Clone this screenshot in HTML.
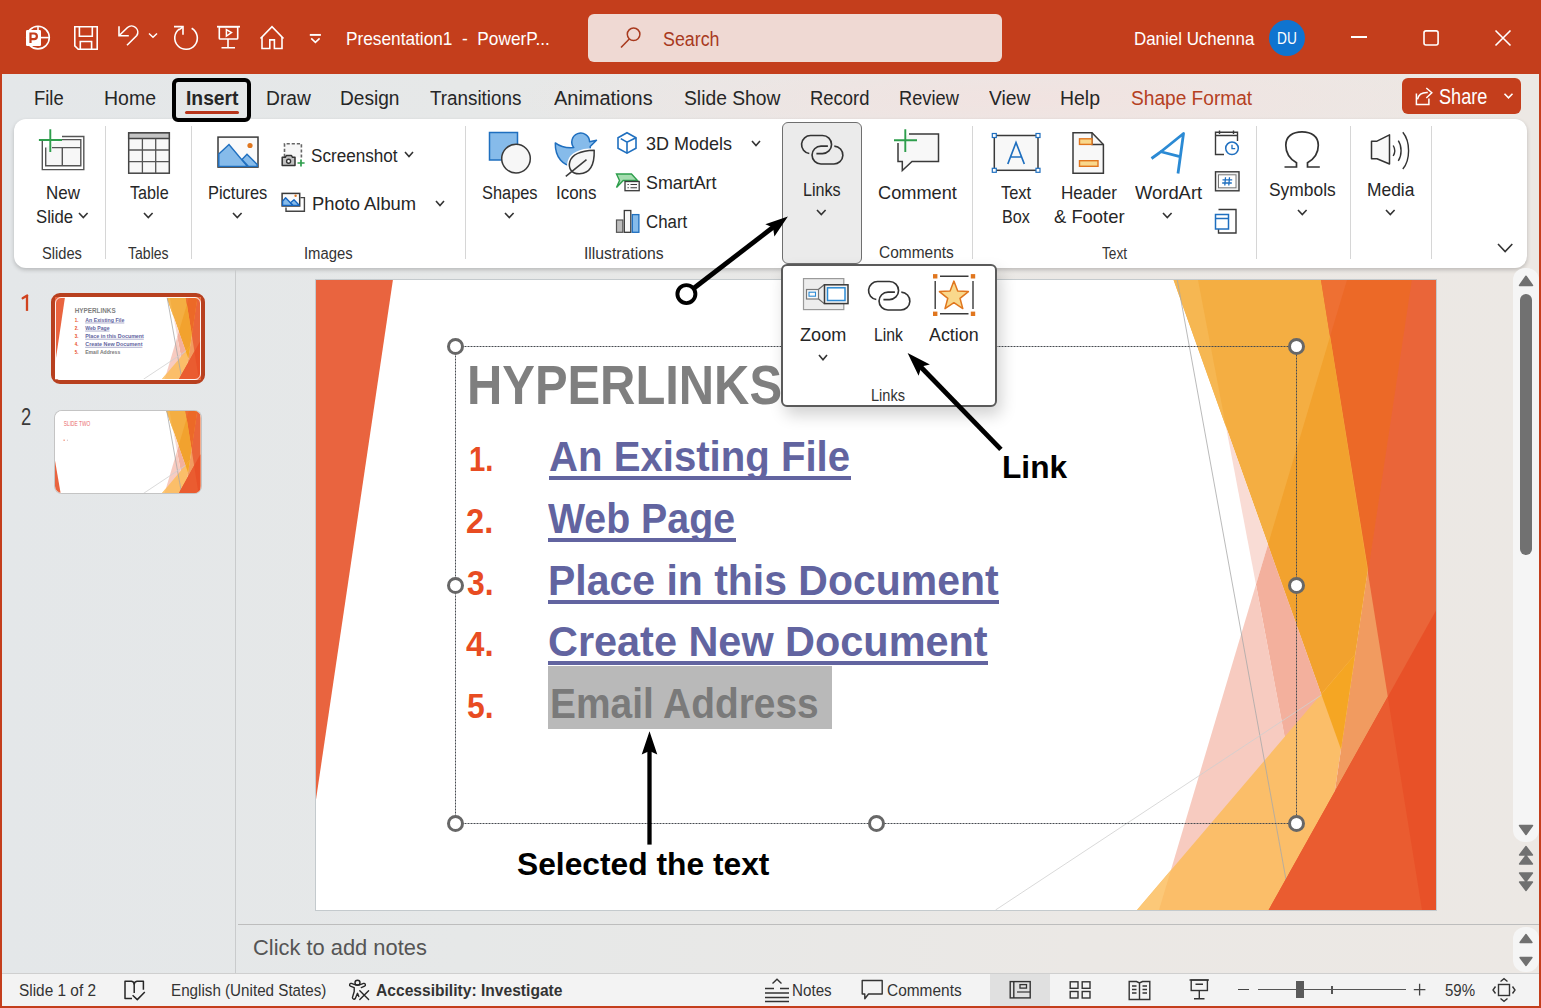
<!DOCTYPE html><html><head><meta charset="utf-8"><style>html,body{margin:0;padding:0;width:1541px;height:1008px;overflow:hidden;position:relative;}body{font-family:"Liberation Sans",sans-serif;}</style></head><body><div style="position:absolute;left:0px;top:0px;width:1541px;height:1008px;background:#C43E1C"></div>
<div style="position:absolute;left:2px;top:74px;width:1537px;height:932px;background:linear-gradient(90deg,#E4E7E9 0%,#E6E8E8 30%,#EBE8E5 70%,#ECE8E4 100%)"></div>
<div style="position:absolute;left:400px;top:74px;width:1139px;height:50px;background:radial-gradient(ellipse 45% 120% at 55% 50%,rgba(242,226,224,0.85),rgba(242,226,224,0) 100%)"></div>
<svg style="position:absolute;left:24px;top:24px;" width="28" height="28" viewBox="0 0 28 28"><circle cx="14" cy="13.6" r="11.3" fill="none" stroke="#fff" stroke-width="1.6"/><line x1="14" y1="2" x2="14" y2="6" stroke="#fff" stroke-width="1.6"/><line x1="17" y1="13.6" x2="25.5" y2="13.6" stroke="#fff" stroke-width="1.6"/><rect x="2" y="6" width="15" height="16" rx="1.2" fill="#fff"/><path d="M6.5 19V9.5h3.6a2.8 2.8 0 0 1 0 5.6H6.5" fill="none" stroke="#C43E1C" stroke-width="2.2"/></svg>
<svg style="position:absolute;left:72px;top:24px;" width="28" height="28" viewBox="0 0 28 28"><path d="M2.8 2.8H25.2V25.2H6.2L2.8 21.8Z" fill="none" stroke="#fff" stroke-width="1.6"/><path d="M7.4 2.8V12.3H20.3V2.8" fill="none" stroke="#fff" stroke-width="1.6"/><path d="M8.3 25.2V17.5H19.6V25.2" fill="none" stroke="#fff" stroke-width="1.6"/></svg>
<svg style="position:absolute;left:116px;top:24px;" width="28" height="28" viewBox="0 0 28 28"><path d="M3 2.2V11.8H12.8" fill="none" stroke="#fff" stroke-width="1.6"/><path d="M3.5 11.3L11.5 3.5A6.2 6.2 0 0 1 20.8 11.5L11 21.2" fill="none" stroke="#fff" stroke-width="1.6"/></svg>
<svg style="position:absolute;left:146px;top:30px;" width="14" height="12" viewBox="0 0 14 12"><path d="M3 3.5L7 7.2L11 3.5" fill="none" stroke="#fff" stroke-width="1.5"/></svg>
<svg style="position:absolute;left:172px;top:24px;" width="28" height="28" viewBox="0 0 28 28"><path d="M19.65 4.2A11.3 11.3 0 1 1 7.5 4.8" fill="none" stroke="#fff" stroke-width="1.6"/><path d="M2 2.6H11V10.7" fill="none" stroke="#fff" stroke-width="1.6"/><path d="M10.5 3.1L7 6" fill="none" stroke="#fff" stroke-width="1.6"/></svg>
<svg style="position:absolute;left:214px;top:22px;" width="30" height="30" viewBox="0 0 30 30"><path d="M3 4.7H26" stroke="#fff" stroke-width="1.8"/><rect x="5.3" y="4.7" width="18.4" height="12.3" rx="0.8" fill="none" stroke="#fff" stroke-width="1.6"/><path d="M14 17V25.8M7.5 25.8H21" stroke="#fff" stroke-width="1.6"/><path d="M12.4 7.6L17.5 10.6L12.4 14Z" fill="none" stroke="#fff" stroke-width="1.5"/></svg>
<svg style="position:absolute;left:258px;top:22px;" width="28" height="30" viewBox="0 0 28 30"><path d="M2.5 16.5L14 4.7L25.5 16.5" fill="none" stroke="#fff" stroke-width="1.7"/><path d="M4 15V26.5H11.8V17.9H16.4V26.5H24V15" fill="none" stroke="#fff" stroke-width="1.6"/></svg>
<svg style="position:absolute;left:306px;top:30px;" width="18" height="16" viewBox="0 0 18 16"><path d="M3.8 4.9H14.9" stroke="#fff" stroke-width="1.9"/><path d="M5.2 8.4L9.4 12.4L13.6 8.4" fill="none" stroke="#fff" stroke-width="1.6"/></svg>
<div style="position:absolute;left:345.60px;top:29.00px;font-size:19.04px;line-height:19.04px;font-weight:normal;color:#FFFFFF;white-space:pre;transform:scaleX(0.9063);transform-origin:0 0;">Presentation1  -  PowerP...</div>
<div style="position:absolute;left:588px;top:14px;width:414px;height:48px;background:#EFD9D3;border-radius:6px"></div>
<svg style="position:absolute;left:616px;top:24px;" width="26" height="28" viewBox="0 0 26 28"><circle cx="17.6" cy="10.3" r="6.3" fill="none" stroke="#A83A1E" stroke-width="1.5"/><path d="M13.3 15L5 23.5" stroke="#A83A1E" stroke-width="1.6"/></svg>
<div style="position:absolute;left:662.70px;top:30.00px;font-size:19.77px;line-height:19.77px;font-weight:normal;color:#A83A1E;white-space:pre;transform:scaleX(0.9022);transform-origin:0 0;">Search</div>
<div style="position:absolute;left:1134.00px;top:29.00px;font-size:19.04px;line-height:19.04px;font-weight:normal;color:#FFFFFF;white-space:pre;transform:scaleX(0.8885);transform-origin:0 0;">Daniel Uchenna</div>
<div style="position:absolute;left:1269px;top:20px;width:36px;height:36px;background:#0F74D0;border-radius:50%"></div>
<div style="position:absolute;left:1277.20px;top:31.00px;font-size:15.99px;line-height:15.99px;font-weight:normal;color:#FFFFFF;white-space:pre;transform:scaleX(0.8576);transform-origin:0 0;">DU</div>
<div style="position:absolute;left:1351px;top:36.3px;width:15.6px;height:1.6px;background:#fff"></div>
<svg style="position:absolute;left:1420px;top:27px;overflow:visible;" width="22" height="22" viewBox="1420 27 22 22"><rect x="1424" y="30.9" width="14.1" height="14.1" rx="2" fill="none" stroke="#fff" stroke-width="1.6"/></svg>
<svg style="position:absolute;left:1494px;top:29px;" width="18" height="18" viewBox="0 0 18 18"><path d="M1.5 1.5L16.5 16.5M16.5 1.5L1.5 16.5" stroke="#fff" stroke-width="1.6"/></svg>
<div style="position:absolute;left:34.30px;top:88.00px;font-size:20.35px;line-height:20.35px;font-weight:normal;color:#262626;white-space:pre;transform:scaleX(0.9060);transform-origin:0 0;">File</div>
<div style="position:absolute;left:103.60px;top:88.00px;font-size:20.35px;line-height:20.35px;font-weight:normal;color:#262626;white-space:pre;transform:scaleX(0.9578);transform-origin:0 0;">Home</div>
<div style="position:absolute;left:185.50px;top:88.00px;font-size:20.35px;line-height:20.35px;font-weight:bold;color:#262626;white-space:pre;transform:scaleX(0.9475);transform-origin:0 0;">Insert</div>
<div style="position:absolute;left:265.50px;top:88.00px;font-size:20.35px;line-height:20.35px;font-weight:normal;color:#262626;white-space:pre;transform:scaleX(0.9446);transform-origin:0 0;">Draw</div>
<div style="position:absolute;left:339.50px;top:88.00px;font-size:20.35px;line-height:20.35px;font-weight:normal;color:#262626;white-space:pre;transform:scaleX(0.9393);transform-origin:0 0;">Design</div>
<div style="position:absolute;left:430.40px;top:88.00px;font-size:20.35px;line-height:20.35px;font-weight:normal;color:#262626;white-space:pre;transform:scaleX(0.9254);transform-origin:0 0;">Transitions</div>
<div style="position:absolute;left:554.30px;top:88.00px;font-size:20.35px;line-height:20.35px;font-weight:normal;color:#262626;white-space:pre;transform:scaleX(0.9805);transform-origin:0 0;">Animations</div>
<div style="position:absolute;left:684.00px;top:88.00px;font-size:20.35px;line-height:20.35px;font-weight:normal;color:#262626;white-space:pre;transform:scaleX(0.9473);transform-origin:0 0;">Slide Show</div>
<div style="position:absolute;left:809.60px;top:88.00px;font-size:20.35px;line-height:20.35px;font-weight:normal;color:#262626;white-space:pre;transform:scaleX(0.9054);transform-origin:0 0;">Record</div>
<div style="position:absolute;left:899.40px;top:88.00px;font-size:20.35px;line-height:20.35px;font-weight:normal;color:#262626;white-space:pre;transform:scaleX(0.8969);transform-origin:0 0;">Review</div>
<div style="position:absolute;left:988.80px;top:88.00px;font-size:20.35px;line-height:20.35px;font-weight:normal;color:#262626;white-space:pre;transform:scaleX(0.9477);transform-origin:0 0;">View</div>
<div style="position:absolute;left:1060.40px;top:88.00px;font-size:20.35px;line-height:20.35px;font-weight:normal;color:#262626;white-space:pre;transform:scaleX(0.9556);transform-origin:0 0;">Help</div>
<div style="position:absolute;left:1131.00px;top:88.00px;font-size:20.35px;line-height:20.35px;font-weight:normal;color:#B5401F;white-space:pre;transform:scaleX(0.9400);transform-origin:0 0;">Shape Format</div>
<div style="position:absolute;left:185px;top:111px;width:54px;height:3px;background:#B8341A;border-radius:2px"></div>
<div style="position:absolute;left:1402px;top:78px;width:119px;height:36px;background:#C43E1C;border-radius:6px"></div>
<svg style="position:absolute;left:1412px;top:86px;" width="22" height="22" viewBox="0 0 22 22"><path d="M4.4 7.5V18.6H16.9V12.5" fill="none" stroke="#fff" stroke-width="1.5"/><path d="M5.5 13.3C6.5 8.5 10.5 6.4 15.8 6.6" fill="none" stroke="#fff" stroke-width="1.5"/><path d="M14.3 2L19.8 6.8L14.3 12" fill="none" stroke="#fff" stroke-width="1.5"/></svg>
<div style="position:absolute;left:1438.70px;top:87.00px;font-size:21.37px;line-height:21.37px;font-weight:normal;color:#FFFFFF;white-space:pre;transform:scaleX(0.8473);transform-origin:0 0;">Share</div>
<svg style="position:absolute;left:1502px;top:90px;" width="14" height="12" viewBox="0 0 14 12"><path d="M2.5 3.8L6.5 7.8L10.5 3.8" fill="none" stroke="#fff" stroke-width="1.6"/></svg>
<div style="position:absolute;left:14px;top:119px;width:1513px;height:149px;background:#fff;border-radius:12px;box-shadow:0 2px 4px rgba(0,0,0,0.2)"></div>
<div style="position:absolute;left:105.1px;top:126.3px;width:1px;height:132.5px;background:#D6D6D6"></div>
<div style="position:absolute;left:190.9px;top:126.3px;width:1px;height:132.5px;background:#D6D6D6"></div>
<div style="position:absolute;left:465.1px;top:126.3px;width:1px;height:132.5px;background:#D6D6D6"></div>
<div style="position:absolute;left:972.0px;top:126.3px;width:1px;height:132.5px;background:#D6D6D6"></div>
<div style="position:absolute;left:1256.1px;top:126.3px;width:1px;height:132.5px;background:#D6D6D6"></div>
<div style="position:absolute;left:1349.9px;top:126.3px;width:1px;height:132.5px;background:#D6D6D6"></div>
<div style="position:absolute;left:1431.1px;top:126.3px;width:1px;height:132.5px;background:#D6D6D6"></div>
<svg style="position:absolute;left:36px;top:126px;overflow:visible;" width="52" height="48" viewBox="36 126 52 48"><path d="M42.3 140V169.6H83.8V136.5H62" fill="none" stroke="#555" stroke-width="1.4"/><path d="M45.7 147.6V165.8H80.8V139.6H62" fill="#F7F7F7" stroke="#555" stroke-width="1.4"/><path d="M52 147.6H80.8M62.3 147.6V165.8" stroke="#555" stroke-width="1.4"/><path d="M38.9 140H62M50.3 129.2V152" stroke="#2E9E4C" stroke-width="1.9"/></svg>
<div style="position:absolute;left:46.00px;top:185.00px;font-size:17.88px;line-height:17.88px;font-weight:normal;color:#262626;white-space:pre;transform:scaleX(0.9495);transform-origin:0 0;">New</div>
<div style="position:absolute;left:35.80px;top:208.00px;font-size:18.31px;line-height:18.31px;font-weight:normal;color:#262626;white-space:pre;transform:scaleX(0.9133);transform-origin:0 0;">Slide</div>
<svg style="position:absolute;left:77.0px;top:211.39999999999998px;overflow:visible;" width="12.6" height="8.6" viewBox="77.0 211.39999999999998 12.6 8.6"><path d="M79.0 213.39999999999998L83.3 218.0L87.6 213.39999999999998" fill="none" stroke="#333" stroke-width="1.6"/></svg>
<div style="position:absolute;left:42.30px;top:246.00px;font-size:15.84px;line-height:15.84px;font-weight:normal;color:#333;white-space:pre;transform:scaleX(0.9269);transform-origin:0 0;">Slides</div>
<svg style="position:absolute;left:126px;top:130px;overflow:visible;" width="46" height="46" viewBox="126 130 46 46"><rect x="128.7" y="132.9" width="40.6" height="40.3" fill="#F8F8F8" stroke="#444" stroke-width="1.5"/><rect x="128.7" y="132.9" width="40.6" height="5.6" fill="#C4C4C4" stroke="#444" stroke-width="1.5"/><path d="M142.4 138.5V173.2M155.7 138.5V173.2M128.7 150H169.3M128.7 161.6H169.3" stroke="#555" stroke-width="1.3"/></svg>
<div style="position:absolute;left:130.00px;top:185.00px;font-size:17.88px;line-height:17.88px;font-weight:normal;color:#262626;white-space:pre;transform:scaleX(0.9053);transform-origin:0 0;">Table</div>
<svg style="position:absolute;left:142.0px;top:211.39999999999998px;overflow:visible;" width="12.6" height="8.6" viewBox="142.0 211.39999999999998 12.6 8.6"><path d="M144.0 213.39999999999998L148.3 218.0L152.60000000000002 213.39999999999998" fill="none" stroke="#333" stroke-width="1.6"/></svg>
<div style="position:absolute;left:127.70px;top:246.00px;font-size:15.84px;line-height:15.84px;font-weight:normal;color:#333;white-space:pre;transform:scaleX(0.8886);transform-origin:0 0;">Tables</div>
<svg style="position:absolute;left:214px;top:133px;overflow:visible;" width="48" height="38" viewBox="214 133 48 38"><rect x="218" y="137.1" width="40" height="30" fill="#FAFAFA" stroke="#3A3A3A" stroke-width="1.5"/><path d="M218.8 154L229 144.5L247.3 166.4H218.8Z" fill="#86BBEA" stroke="#1F6FBF" stroke-width="1.4"/><path d="M242 159.5L247 154.2L257.2 164.5V166.4H248.5Z" fill="#86BBEA" stroke="#1F6FBF" stroke-width="1.4"/><circle cx="250" cy="145.5" r="2.6" fill="#E0761E"/></svg>
<div style="position:absolute;left:207.80px;top:184.00px;font-size:18.46px;line-height:18.46px;font-weight:normal;color:#262626;white-space:pre;transform:scaleX(0.8909);transform-origin:0 0;">Pictures</div>
<svg style="position:absolute;left:231.0px;top:211.1px;overflow:visible;" width="12.6" height="8.6" viewBox="231.0 211.1 12.6 8.6"><path d="M233.0 213.1L237.3 217.70000000000002L241.60000000000002 213.1" fill="none" stroke="#333" stroke-width="1.6"/></svg>
<svg style="position:absolute;left:278px;top:140px;overflow:visible;" width="30" height="30" viewBox="278 140 30 30"><path d="M284.5 157V143.8H301.4V157.5" fill="#F7F7F7" stroke="#666" stroke-width="1.6" stroke-dasharray="3.2 1.9"/><path d="M282.2 157.3H285.3L286.3 155.5H291.5L292.5 157.3H295V165.6H282.2Z" fill="#C2C2C2" stroke="#333" stroke-width="1.5" stroke-linejoin="round"/><circle cx="288.6" cy="161.2" r="2" fill="#fff" stroke="#333" stroke-width="1.4"/><path d="M297.5 163H304.6M301 159.4V166.6" stroke="#2E9E4C" stroke-width="1.7"/></svg>
<div style="position:absolute;left:311.40px;top:147.00px;font-size:18.90px;line-height:18.90px;font-weight:normal;color:#262626;white-space:pre;transform:scaleX(0.9059);transform-origin:0 0;">Screenshot</div>
<svg style="position:absolute;left:402.5px;top:150.25px;overflow:visible;" width="12" height="8.5" viewBox="402.5 150.25 12 8.5"><path d="M404.5 152.25L408.5 156.75L412.5 152.25" fill="none" stroke="#333" stroke-width="1.6"/></svg>
<svg style="position:absolute;left:278px;top:189px;overflow:visible;" width="30" height="26" viewBox="278 189 30 26"><path d="M300.5 197.6H304.4V211.3H286V207.5" fill="none" stroke="#444" stroke-width="1.4"/><rect x="282.1" y="193.4" width="17.6" height="12.6" fill="#FAFAFA" stroke="#3A3A3A" stroke-width="1.5"/><path d="M282.6 201.2L285.6 197.8L292.8 205.3H282.6Z" fill="#86BBEA" stroke="#1565C0" stroke-width="1.3" stroke-linejoin="round"/><path d="M290.5 202.8L294 199.8L299.2 205.3H293Z" fill="#86BBEA" stroke="#1565C0" stroke-width="1.3" stroke-linejoin="round"/><circle cx="295.6" cy="195.8" r="1.2" fill="#E0761E"/></svg>
<div style="position:absolute;left:311.70px;top:194.00px;font-size:19.19px;line-height:19.19px;font-weight:normal;color:#262626;white-space:pre;transform:scaleX(0.9569);transform-origin:0 0;">Photo Album</div>
<svg style="position:absolute;left:434.4px;top:199.35px;overflow:visible;" width="12" height="8.5" viewBox="434.4 199.35 12 8.5"><path d="M436.4 201.35L440.4 205.85L444.4 201.35" fill="none" stroke="#333" stroke-width="1.6"/></svg>
<div style="position:absolute;left:303.60px;top:246.00px;font-size:15.84px;line-height:15.84px;font-weight:normal;color:#333;white-space:pre;transform:scaleX(0.9375);transform-origin:0 0;">Images</div>
<svg style="position:absolute;left:486px;top:130px;overflow:visible;" width="48" height="46" viewBox="486 130 48 46"><rect x="489.5" y="132.5" width="28" height="27.5" fill="#86BBEA" stroke="#1F6FBF" stroke-width="1.5"/><circle cx="516" cy="158.6" r="14.3" fill="#F7F7F7" stroke="#3A3A3A" stroke-width="1.5"/></svg>
<div style="position:absolute;left:481.50px;top:185.00px;font-size:17.88px;line-height:17.88px;font-weight:normal;color:#262626;white-space:pre;transform:scaleX(0.9169);transform-origin:0 0;">Shapes</div>
<svg style="position:absolute;left:503.0px;top:211.1px;overflow:visible;" width="12.6" height="8.6" viewBox="503.0 211.1 12.6 8.6"><path d="M505.0 213.1L509.3 217.70000000000002L513.6 213.1" fill="none" stroke="#333" stroke-width="1.6"/></svg>
<svg style="position:absolute;left:552px;top:128px;overflow:visible;" width="48" height="52" viewBox="552 128 48 52"><path d="M555.3 142.9C560 146.5 567 148.2 573.8 147.6A8.9 8.9 0 1 1 589.6 141.8L596.5 140.3L590.2 146.5C591.5 157 585 165.5 574.5 166.2C563 166.5 555 157 555.3 142.9Z" fill="#86BBEA" stroke="#1F6FBF" stroke-width="1.5" stroke-linejoin="round"/><path d="M594.2 150.3C594.5 161 592.5 173.3 579.5 173.8C571.5 174 568 168 569.8 161.8C572 154.5 580 150.8 594.2 150.3Z" fill="#F7F7F7" stroke="#fff" stroke-width="4.5" stroke-linejoin="round"/><path d="M594.2 150.3C594.5 161 592.5 173.3 579.5 173.8C571.5 174 568 168 569.8 161.8C572 154.5 580 150.8 594.2 150.3Z" fill="#F7F7F7" stroke="#3A3A3A" stroke-width="1.5" stroke-linejoin="round"/><path d="M565.8 176.3L586.5 159.6" stroke="#3A3A3A" stroke-width="1.5"/></svg>
<div style="position:absolute;left:555.70px;top:185.00px;font-size:17.88px;line-height:17.88px;font-weight:normal;color:#262626;white-space:pre;transform:scaleX(0.9479);transform-origin:0 0;">Icons</div>
<svg style="position:absolute;left:614px;top:130px;overflow:visible;" width="26" height="26" viewBox="614 130 26 26"><path d="M627 132.7L636 137.7V148.2L627 153.2L618 148.2V137.7Z" fill="none" stroke="#1F6FBF" stroke-width="1.6"/><path d="M620.8 138.6L627 142.2L636 137.7M627 142.2V153.2" fill="none" stroke="#1F6FBF" stroke-width="1.6"/></svg>
<div style="position:absolute;left:646.40px;top:135.00px;font-size:18.31px;line-height:18.31px;font-weight:normal;color:#262626;white-space:pre;transform:scaleX(0.9835);transform-origin:0 0;">3D Models</div>
<svg style="position:absolute;left:750.0px;top:139.45px;overflow:visible;" width="12" height="8.5" viewBox="750.0 139.45 12 8.5"><path d="M752.0 141.45L756 145.95L760.0 141.45" fill="none" stroke="#333" stroke-width="1.6"/></svg>
<svg style="position:absolute;left:613px;top:170px;overflow:visible;" width="30" height="24" viewBox="613 170 30 24"><path d="M616.5 174H631.5L637.5 180.5H623.2L616.5 187.5L619.5 180.5Z" fill="#A6DDB0" stroke="#2E9E4C" stroke-width="1.4"/><rect x="625" y="181.5" width="14.2" height="9.2" fill="#FAFAFA" stroke="#3A3A3A" stroke-width="1.3"/><path d="M627.5 184.5H628.8M630.5 184.5H637M627.5 187.8H628.8M630.5 187.8H637" stroke="#3A3A3A" stroke-width="1.1"/></svg>
<div style="position:absolute;left:646.40px;top:174.00px;font-size:18.31px;line-height:18.31px;font-weight:normal;color:#262626;white-space:pre;transform:scaleX(0.9772);transform-origin:0 0;">SmartArt</div>
<svg style="position:absolute;left:613px;top:207px;overflow:visible;" width="30" height="28" viewBox="613 207 30 28"><rect x="616.5" y="220" width="6.3" height="12.3" fill="#BDBDBD" stroke="#555" stroke-width="1.2"/><rect x="624.3" y="210.5" width="6.5" height="21.8" fill="#FAFAFA" stroke="#3A3A3A" stroke-width="1.3"/><rect x="632.3" y="214.6" width="6.6" height="17.7" fill="#86BBEA" stroke="#1F6FBF" stroke-width="1.3"/></svg>
<div style="position:absolute;left:646.40px;top:213.00px;font-size:18.46px;line-height:18.46px;font-weight:normal;color:#262626;white-space:pre;transform:scaleX(0.9129);transform-origin:0 0;">Chart</div>
<div style="position:absolute;left:583.60px;top:246.00px;font-size:15.84px;line-height:15.84px;font-weight:normal;color:#333;white-space:pre;transform:scaleX(0.9946);transform-origin:0 0;">Illustrations</div>
<div style="position:absolute;left:782px;top:122px;width:80px;height:142px;background:#EBEBEB;border:1px solid #6F6F6F;border-radius:6px;box-sizing:border-box"></div>
<svg style="position:absolute;left:798px;top:132px;overflow:visible;" width="48" height="36" viewBox="798 132 48 36"><g transform="translate(0 0)"><path d="M809.3 153.5A9.05 9.05 0 0 1 810.9 135.5H822.5A9.05 9.05 0 0 1 822.5 153.6H816.4" fill="none" stroke="#333" stroke-width="1.65"/><path d="M827.9 146.1H821A8.95 8.95 0 0 0 821 164H833.5A8.95 8.95 0 0 0 834.3 146.1" fill="none" stroke="#333" stroke-width="1.65"/></g></svg>
<div style="position:absolute;left:802.70px;top:182.00px;font-size:17.88px;line-height:17.88px;font-weight:normal;color:#262626;white-space:pre;transform:scaleX(0.9035);transform-origin:0 0;">Links</div>
<svg style="position:absolute;left:814.9000000000001px;top:208.1px;overflow:visible;" width="12.6" height="8.6" viewBox="814.9000000000001 208.1 12.6 8.6"><path d="M816.9000000000001 210.1L821.2 214.70000000000002L825.5 210.1" fill="none" stroke="#333" stroke-width="1.6"/></svg>
<svg style="position:absolute;left:890px;top:126px;overflow:visible;" width="52" height="50" viewBox="890 126 52 50"><path d="M898 143V161.5H902.3V170.5L912 161.5H938.5V134H909" fill="#F8F8F8" stroke="#3A3A3A" stroke-width="1.5"/><path d="M894 140.2H917M905.3 129.2V152" stroke="#2E9E4C" stroke-width="1.9"/></svg>
<div style="position:absolute;left:878.40px;top:185.00px;font-size:17.88px;line-height:17.88px;font-weight:normal;color:#262626;white-space:pre;transform:scaleX(1.0181);transform-origin:0 0;">Comment</div>
<div style="position:absolute;left:879.30px;top:245.00px;font-size:15.84px;line-height:15.84px;font-weight:normal;color:#333;white-space:pre;transform:scaleX(0.9778);transform-origin:0 0;">Comments</div>
<svg style="position:absolute;left:989px;top:130px;overflow:visible;" width="54" height="46" viewBox="989 130 54 46"><rect x="994.3" y="135.5" width="43.7" height="34.8" fill="#F8F8F8" stroke="#3A3A3A" stroke-width="1.5"/><g fill="#fff" stroke="#1F6FBF" stroke-width="1.2"><rect x="992.3" y="133.5" width="4" height="4"/><rect x="1036" y="133.5" width="4" height="4"/><rect x="992.3" y="168.3" width="4" height="4"/><rect x="1036" y="168.3" width="4" height="4"/></g><path d="M1007.8 164L1016 142.5L1024.3 164M1010.5 157H1021.5" fill="none" stroke="#1F6FBF" stroke-width="1.7"/></svg>
<div style="position:absolute;left:1001.00px;top:185.00px;font-size:17.88px;line-height:17.88px;font-weight:normal;color:#262626;white-space:pre;transform:scaleX(0.9211);transform-origin:0 0;">Text</div>
<div style="position:absolute;left:1002.00px;top:209.00px;font-size:17.88px;line-height:17.88px;font-weight:normal;color:#262626;white-space:pre;transform:scaleX(0.9057);transform-origin:0 0;">Box</div>
<svg style="position:absolute;left:1069px;top:129px;overflow:visible;" width="40" height="48" viewBox="1069 129 40 48"><path d="M1073 132.7H1092L1103.4 144.5V173.3H1073Z" fill="#F8F8F8" stroke="#3A3A3A" stroke-width="1.5"/><path d="M1092 132.7V144.5H1103.4" fill="none" stroke="#3A3A3A" stroke-width="1.4"/><rect x="1079.5" y="138.8" width="12.5" height="5.6" fill="#F9D88C" stroke="#E0761E" stroke-width="1.4"/><rect x="1079.5" y="160.7" width="18.5" height="5.6" fill="#F9D88C" stroke="#E0761E" stroke-width="1.4"/></svg>
<div style="position:absolute;left:1061.30px;top:185.00px;font-size:17.88px;line-height:17.88px;font-weight:normal;color:#262626;white-space:pre;transform:scaleX(0.9550);transform-origin:0 0;">Header</div>
<div style="position:absolute;left:1053.80px;top:209.00px;font-size:17.88px;line-height:17.88px;font-weight:normal;color:#262626;white-space:pre;transform:scaleX(1.0297);transform-origin:0 0;">& Footer</div>
<svg style="position:absolute;left:1148px;top:129px;overflow:visible;" width="42" height="48" viewBox="1148 129 42 48"><path d="M1151.5 158.5L1158.5 153.5C1164 149.5 1173 142 1183.5 133.5L1178 173.5M1160 151.5L1179 156.3" fill="none" stroke="#2B8AD4" stroke-width="2.8" stroke-linejoin="round"/></svg>
<div style="position:absolute;left:1134.80px;top:185.00px;font-size:17.88px;line-height:17.88px;font-weight:normal;color:#262626;white-space:pre;transform:scaleX(1.0301);transform-origin:0 0;">WordArt</div>
<svg style="position:absolute;left:1160.9px;top:211.2px;overflow:visible;" width="12.6" height="8.6" viewBox="1160.9 211.2 12.6 8.6"><path d="M1162.9 213.2L1167.2 217.8L1171.5 213.2" fill="none" stroke="#333" stroke-width="1.6"/></svg>
<svg style="position:absolute;left:1212px;top:128px;overflow:visible;" width="30" height="30" viewBox="1212 128 30 30"><path d="M1237.5 141V132.3H1215.5V154.5H1224" fill="none" stroke="#3A3A3A" stroke-width="1.4"/><path d="M1215.5 135.5H1237.5M1219.5 130.5V134M1233.5 130.5V134" stroke="#3A3A3A" stroke-width="1.4"/><circle cx="1232" cy="148.3" r="6.3" fill="#fff" stroke="#1F6FBF" stroke-width="1.5"/><path d="M1232 144.8V148.6H1235.2" fill="none" stroke="#1F6FBF" stroke-width="1.3"/></svg>
<svg style="position:absolute;left:1212px;top:168px;overflow:visible;" width="30" height="26" viewBox="1212 168 30 26"><rect x="1215.5" y="171.8" width="23.5" height="19" fill="#F0F0F0" stroke="#3A3A3A" stroke-width="1.4"/><rect x="1218.5" y="174.8" width="17.5" height="13" fill="#fff" stroke="#777" stroke-width="1"/><path d="M1225.5 177.3L1224.8 185.5M1229.5 177.3L1228.8 185.5M1222.5 179.8H1232.2M1222.2 183H1231.8" stroke="#1F6FBF" stroke-width="1.3"/></svg>
<svg style="position:absolute;left:1212px;top:206px;overflow:visible;" width="30" height="30" viewBox="1212 206 30 30"><path d="M1218.5 209.5H1236V233H1218.5V229" fill="none" stroke="#3A3A3A" stroke-width="1.4"/><rect x="1215.5" y="214.5" width="13" height="14.5" fill="#fff" stroke="#1F6FBF" stroke-width="1.5"/><path d="M1215.5 218.5H1228.5" stroke="#1F6FBF" stroke-width="1.5"/></svg>
<div style="position:absolute;left:1101.80px;top:246.00px;font-size:15.84px;line-height:15.84px;font-weight:normal;color:#333;white-space:pre;transform:scaleX(0.8638);transform-origin:0 0;">Text</div>
<svg style="position:absolute;left:1280px;top:129px;overflow:visible;" width="44" height="42" viewBox="1280 129 44 42"><path d="M1284.5 167H1296.5V162.8C1290 159 1285.8 152.5 1285.8 145.2C1285.8 136.5 1292.5 131.8 1302 131.8C1311.5 131.8 1318.3 136.5 1318.3 145.2C1318.3 152.5 1314 159 1307.5 162.8V167H1319.8" fill="none" stroke="#333" stroke-width="1.7"/></svg>
<div style="position:absolute;left:1269.40px;top:181.00px;font-size:18.46px;line-height:18.46px;font-weight:normal;color:#262626;white-space:pre;transform:scaleX(0.9436);transform-origin:0 0;">Symbols</div>
<svg style="position:absolute;left:1295.8px;top:208.1px;overflow:visible;" width="12.6" height="8.6" viewBox="1295.8 208.1 12.6 8.6"><path d="M1297.8 210.1L1302.1 214.70000000000002L1306.3999999999999 210.1" fill="none" stroke="#333" stroke-width="1.6"/></svg>
<svg style="position:absolute;left:1368px;top:128px;overflow:visible;" width="46" height="44" viewBox="1368 128 46 44"><path d="M1371.5 147.8V158.7H1377L1389.5 164V134.8L1377 141.2H1371.5Z" fill="#F8F8F8" stroke="#333" stroke-width="1.5" stroke-linejoin="round"/><path d="M1393.2 145.5C1395 148.5 1395 153 1393.2 156" fill="none" stroke="#333" stroke-width="1.4"/><path d="M1398.3 140.6C1402 146 1402 155.2 1398.3 160.8" fill="none" stroke="#333" stroke-width="1.4"/><path d="M1402.8 132.2C1410.5 141.5 1410.5 160 1402.8 169" fill="none" stroke="#333" stroke-width="1.4"/></svg>
<div style="position:absolute;left:1366.70px;top:181.00px;font-size:18.46px;line-height:18.46px;font-weight:normal;color:#262626;white-space:pre;transform:scaleX(0.9443);transform-origin:0 0;">Media</div>
<svg style="position:absolute;left:1383.9px;top:208.1px;overflow:visible;" width="12.6" height="8.6" viewBox="1383.9 208.1 12.6 8.6"><path d="M1385.9 210.1L1390.2 214.70000000000002L1394.5 210.1" fill="none" stroke="#333" stroke-width="1.6"/></svg>
<svg style="position:absolute;left:1496.05px;top:241.5px;overflow:visible;" width="18.3" height="11.6" viewBox="1496.05 241.5 18.3 11.6"><path d="M1498.05 243.5L1505.2 251.10000000000002L1512.3500000000001 243.5" fill="none" stroke="#333" stroke-width="1.6"/></svg>
<div style="position:absolute;left:171.5px;top:78px;width:79px;height:44px;border:4px solid #000;border-radius:6px;box-sizing:border-box"></div>
<div style="position:absolute;left:235.3px;top:270px;width:1px;height:703px;background:#C9CBCC"></div>
<svg style="position:absolute;left:18px;top:292px;overflow:visible;" width="14" height="22" viewBox="18 292 14 22"><path d="M27 295.3V310.9" stroke="#D0431F" stroke-width="2.3"/><path d="M22.6 298.3L27.2 295.5" stroke="#D0431F" stroke-width="2.2" stroke-linecap="round"/></svg>
<div style="position:absolute;left:21.00px;top:405.00px;font-size:24.13px;line-height:24.13px;font-weight:normal;color:#3A3A3A;white-space:pre;transform:scaleX(0.7603);transform-origin:0 0;">2</div>
<div style="position:absolute;left:51px;top:293.2px;width:154px;height:91px;border:4px solid #B8401F;border-radius:9px;box-sizing:border-box"></div>
<div style="position:absolute;left:55px;top:297.2px;width:146px;height:83px;border-radius:6px;overflow:hidden;background:#fff"></div>
<svg style="position:absolute;left:55.3px;top:297.4px" width="145.7" height="82.3" viewBox="0 0 1120 631" preserveAspectRatio="none"><rect width="1120" height="631" fill="#fff"/><polygon fill="#E9643F" points="0,0 76.9,0 0,520.3"/><polygon fill="#F19B60" points="1095,0 1120,0 1120,631 1001,631"/><polygon fill="#EA6539" points="1005,0 1120,0 1120,631 1106,631"/><polygon fill="#F4AE42" points="857.6,0 1095,0 1025,470"/><polygon fill="#F6B752" points="857.6,0 882,0 910,147"/><polygon fill="#EC6927" points="1005,0 1095.8,0 1052.2,291.5"/><polygon fill="#EE7033" points="1005,0 1031,0 1014,56.8"/><polygon fill="#F2A22E" points="1014,56.8 1051.6,291 1025,470 952,265"/><polygon fill="#F9DCD5" points="910,147 952,265 940,305"/><polygon fill="#F3B09D" points="940,305 952,265 1025,470 1001,631"/><polygon fill="#F7CBC0" points="940,305 1001.5,631 843,631"/><polygon fill="#FBBE69" points="821,631 1039,375 1001,631"/><polygon fill="#F5A623" points="1005.3,415 1039,375 1025,470"/><polygon fill="#FCC878" points="821,631 843,631 855,591"/><line x1="861.3" y1="0" x2="975.5" y2="631" stroke="#A8A8A8" stroke-width="6"/><line x1="679.5" y1="631" x2="1005.6" y2="415.6" stroke="#CFCFCF" stroke-width="6"/><polygon fill="#E85128" points="952.6,631 1120,331 1120,631"/><polygon fill="#EA5C30" points="952.6,631 1071.8,417.4 1106,631"/><g font-family="Liberation Sans" font-weight="bold"><text x="151.3" y="125.1" font-size="55" fill="#7F7F7F" textLength="315" lengthAdjust="spacingAndGlyphs">HYPERLINKS</text><text x="152" y="192.2" font-size="34" fill="#E84C22">1.</text><text x="152" y="253.9" font-size="34" fill="#E84C22">2.</text><text x="152" y="315.7" font-size="34" fill="#E84C22">3.</text><text x="152" y="377.4" font-size="34" fill="#E84C22">4.</text><text x="152" y="439.2" font-size="34" fill="#E84C22">5.</text><text x="232.5" y="192.2" font-size="42" fill="#6264A0" textLength="301" lengthAdjust="spacingAndGlyphs">An Existing File</text><rect x="232" y="197.2" width="301" height="4" fill="#6264A0"/><text x="232.5" y="253.9" font-size="42" fill="#6264A0" textLength="187" lengthAdjust="spacingAndGlyphs">Web Page</text><rect x="232" y="258.9" width="187" height="4" fill="#6264A0"/><text x="232.5" y="315.7" font-size="42" fill="#6264A0" textLength="450.7" lengthAdjust="spacingAndGlyphs">Place in this Document</text><rect x="232" y="320.7" width="450.7" height="4" fill="#6264A0"/><text x="232.5" y="377.4" font-size="42" fill="#6264A0" textLength="439.8" lengthAdjust="spacingAndGlyphs">Create New Document</text><rect x="232" y="382.4" width="439.8" height="4" fill="#6264A0"/><text x="232.5" y="439.2" font-size="42" fill="#7A7A7A" textLength="269" lengthAdjust="spacingAndGlyphs">Email Address</text></g></svg>
<div style="position:absolute;left:55px;top:297.2px;width:146px;height:83px;border:1px solid rgba(255,255,255,0.9);border-radius:6px;box-sizing:border-box"></div>
<div style="position:absolute;left:55.3px;top:410.8px;width:145.4px;height:82.6px;border-radius:7px;box-shadow:0 0 0 1px #C4C4C4;background:#fff"></div>
<div style="position:absolute;left:55.3px;top:410.8px;width:145.4px;height:82.6px;border-radius:7px;overflow:hidden"><svg style="position:absolute;left:0px;top:0px" width="145.4" height="82.6" viewBox="0 0 1120 631" preserveAspectRatio="none"><rect width="1120" height="631" fill="#fff"/><polygon fill="#E9643F" points="0,379 0,631 44,631"/><polygon fill="#F19B60" points="1095,0 1120,0 1120,631 1001,631"/><polygon fill="#EA6539" points="1005,0 1120,0 1120,631 1106,631"/><polygon fill="#F4AE42" points="857.6,0 1095,0 1025,470"/><polygon fill="#F6B752" points="857.6,0 882,0 910,147"/><polygon fill="#EC6927" points="1005,0 1095.8,0 1052.2,291.5"/><polygon fill="#EE7033" points="1005,0 1031,0 1014,56.8"/><polygon fill="#F2A22E" points="1014,56.8 1051.6,291 1025,470 952,265"/><polygon fill="#F9DCD5" points="910,147 952,265 940,305"/><polygon fill="#F3B09D" points="940,305 952,265 1025,470 1001,631"/><polygon fill="#F7CBC0" points="940,305 1001.5,631 843,631"/><polygon fill="#FBBE69" points="821,631 1039,375 1001,631"/><polygon fill="#F5A623" points="1005.3,415 1039,375 1025,470"/><polygon fill="#FCC878" points="821,631 843,631 855,591"/><line x1="861.3" y1="0" x2="975.5" y2="631" stroke="#A8A8A8" stroke-width="6"/><line x1="679.5" y1="631" x2="1005.6" y2="415.6" stroke="#CFCFCF" stroke-width="6"/><polygon fill="#E85128" points="952.6,631 1120,331 1120,631"/><polygon fill="#EA5C30" points="952.6,631 1071.8,417.4 1106,631"/><text x="68" y="111" font-family="Liberation Sans" font-size="52" fill="#EA6A6A" textLength="204" lengthAdjust="spacingAndGlyphs">SLIDE TWO</text><rect x="66" y="219" width="8" height="8" fill="#E84C22"/><rect x="92" y="220" width="7" height="6" fill="#A9A"/></svg></div>
<div style="position:absolute;left:315px;top:279px;width:1122px;height:632px;background:#fff;border:1px solid #C4CACD;box-sizing:border-box"></div>
<svg style="position:absolute;left:316px;top:280px" width="1120" height="630" viewBox="0 0 1120 631" preserveAspectRatio="none"><polygon fill="#E9643F" points="0,0 76.9,0 0,520.3"/><polygon fill="#F19B60" points="1095,0 1120,0 1120,631 1001,631"/><polygon fill="#EA6539" points="1005,0 1120,0 1120,631 1106,631"/><polygon fill="#F4AE42" points="857.6,0 1095,0 1025,470"/><polygon fill="#F6B752" points="857.6,0 882,0 910,147"/><polygon fill="#EC6927" points="1005,0 1095.8,0 1052.2,291.5"/><polygon fill="#EE7033" points="1005,0 1031,0 1014,56.8"/><polygon fill="#F2A22E" points="1014,56.8 1051.6,291 1025,470 952,265"/><polygon fill="#F9DCD5" points="910,147 952,265 940,305"/><polygon fill="#F3B09D" points="940,305 952,265 1025,470 1001,631"/><polygon fill="#F7CBC0" points="940,305 1001.5,631 843,631"/><polygon fill="#FBBE69" points="821,631 1039,375 1001,631"/><polygon fill="#F5A623" points="1005.3,415 1039,375 1025,470"/><polygon fill="#FCC878" points="821,631 843,631 855,591"/><line x1="861.3" y1="0" x2="975.5" y2="631" stroke="#A8A8A8" stroke-width="0.8"/><line x1="679.5" y1="631" x2="1005.6" y2="415.6" stroke="#CFCFCF" stroke-width="0.8"/><polygon fill="#E85128" points="952.6,631 1120,331 1120,631"/><polygon fill="#EA5C30" points="952.6,631 1071.8,417.4 1106,631"/></svg>
<div style="position:absolute;left:548.1px;top:666.2px;width:284.2px;height:62.9px;background:#B9B9B9"></div>
<div style="position:absolute;left:467.30px;top:357.00px;font-size:56.25px;line-height:56.25px;font-weight:bold;color:#7F7F7F;white-space:pre;transform:scaleX(0.8689);transform-origin:0 0;">HYPERLINKS</div>
<div style="position:absolute;left:468.60px;top:442.00px;font-size:34.88px;line-height:34.88px;font-weight:bold;color:#E84C22;white-space:pre;transform:scaleX(0.8421);transform-origin:0 0;">1.</div>
<div style="position:absolute;left:549.00px;top:435.00px;font-size:43.31px;line-height:43.31px;font-weight:bold;color:#6264A0;white-space:pre;transform:scaleX(0.9271);transform-origin:0 0;">An Existing File</div>
<div style="position:absolute;left:548.5px;top:476px;width:302.20000000000005px;height:4px;background:#6264A0"></div>
<div style="position:absolute;left:466.40px;top:504.00px;font-size:34.88px;line-height:34.88px;font-weight:bold;color:#E84C22;white-space:pre;transform:scaleX(0.9349);transform-origin:0 0;">2.</div>
<div style="position:absolute;left:548.10px;top:497.00px;font-size:43.31px;line-height:43.31px;font-weight:bold;color:#6264A0;white-space:pre;transform:scaleX(0.9073);transform-origin:0 0;">Web Page</div>
<div style="position:absolute;left:547.6px;top:538px;width:188.10000000000002px;height:4px;background:#6264A0"></div>
<div style="position:absolute;left:467.00px;top:566.00px;font-size:34.88px;line-height:34.88px;font-weight:bold;color:#E84C22;white-space:pre;transform:scaleX(0.9143);transform-origin:0 0;">3.</div>
<div style="position:absolute;left:548.00px;top:559.00px;font-size:43.31px;line-height:43.31px;font-weight:bold;color:#6264A0;white-space:pre;transform:scaleX(0.9458);transform-origin:0 0;">Place in this Document</div>
<div style="position:absolute;left:547.5px;top:600px;width:451.70000000000005px;height:4px;background:#6264A0"></div>
<div style="position:absolute;left:466.00px;top:627.00px;font-size:34.88px;line-height:34.88px;font-weight:bold;color:#E84C22;white-space:pre;transform:scaleX(0.9487);transform-origin:0 0;">4.</div>
<div style="position:absolute;left:548.00px;top:620.00px;font-size:43.31px;line-height:43.31px;font-weight:bold;color:#6264A0;white-space:pre;transform:scaleX(0.9566);transform-origin:0 0;">Create New Document</div>
<div style="position:absolute;left:547.5px;top:661px;width:440.79999999999995px;height:4px;background:#6264A0"></div>
<div style="position:absolute;left:467.00px;top:689.00px;font-size:34.88px;line-height:34.88px;font-weight:bold;color:#E84C22;white-space:pre;transform:scaleX(0.9143);transform-origin:0 0;">5.</div>
<div style="position:absolute;left:550.00px;top:682.00px;font-size:43.31px;line-height:43.31px;font-weight:bold;color:#7A7A7A;white-space:pre;transform:scaleX(0.8981);transform-origin:0 0;">Email Address</div>
<svg style="position:absolute;left:450px;top:340px;overflow:visible;" width="852" height="490" viewBox="450 340 852 490"><rect x="455.5" y="346.5" width="841" height="477" fill="none" stroke="#464B50" stroke-width="1" stroke-dasharray="2 1"/></svg>
<div style="position:absolute;left:447.0px;top:337.9px;width:17px;height:17px;background:#fff;border:3px solid #676767;border-radius:50%;box-sizing:border-box"></div>
<div style="position:absolute;left:1287.5px;top:337.9px;width:17px;height:17px;background:#fff;border:3px solid #676767;border-radius:50%;box-sizing:border-box"></div>
<div style="position:absolute;left:447.0px;top:576.5px;width:17px;height:17px;background:#fff;border:3px solid #676767;border-radius:50%;box-sizing:border-box"></div>
<div style="position:absolute;left:1287.5px;top:576.5px;width:17px;height:17px;background:#fff;border:3px solid #676767;border-radius:50%;box-sizing:border-box"></div>
<div style="position:absolute;left:447.0px;top:814.7px;width:17px;height:17px;background:#fff;border:3px solid #676767;border-radius:50%;box-sizing:border-box"></div>
<div style="position:absolute;left:867.5px;top:814.7px;width:17px;height:17px;background:#fff;border:3px solid #676767;border-radius:50%;box-sizing:border-box"></div>
<div style="position:absolute;left:1287.5px;top:814.7px;width:17px;height:17px;background:#fff;border:3px solid #676767;border-radius:50%;box-sizing:border-box"></div>
<div style="position:absolute;left:867.5px;top:337.9px;width:17px;height:17px;background:#fff;border:3px solid #676767;border-radius:50%;box-sizing:border-box"></div>
<div style="position:absolute;left:781.4px;top:264.4px;width:215.2px;height:142.2px;background:#fff;border:2px solid #5A5A5A;border-radius:6px;box-sizing:border-box;box-shadow:4px 8px 16px rgba(0,0,0,0.18)"></div>
<svg style="position:absolute;left:800px;top:272px;overflow:visible;" width="52" height="42" viewBox="800 272 52 42"><rect x="803.5" y="278.6" width="40.3" height="31" fill="#EDEDED" stroke="#9A9A9A" stroke-width="1.2"/><path d="M818.6 289.3L824.2 284.8M818.6 299L824.2 303.6" stroke="#666" stroke-width="1.2"/><rect x="806.5" y="289.5" width="12" height="9.5" fill="#FAFAFA" stroke="#777" stroke-width="1.2"/><rect x="809" y="292.2" width="6.5" height="4" fill="none" stroke="#2B8AD4" stroke-width="1.1"/><rect x="824.5" y="284.8" width="23.5" height="18.8" fill="#F3F3F3" stroke="#3A3A3A" stroke-width="1.5"/><rect x="827.5" y="287.8" width="17.5" height="12.7" fill="#fff" stroke="#2B8AD4" stroke-width="1.5"/></svg>
<svg style="position:absolute;left:864.5px;top:277.5px;overflow:visible;" width="48" height="36" viewBox="864.5 277.5 48 36"><g transform="translate(66.5 145.5)"><path d="M809.3 153.5A9.05 9.05 0 0 1 810.9 135.5H822.5A9.05 9.05 0 0 1 822.5 153.6H816.4" fill="none" stroke="#333" stroke-width="1.65"/><path d="M827.9 146.1H821A8.95 8.95 0 0 0 821 164H833.5A8.95 8.95 0 0 0 834.3 146.1" fill="none" stroke="#333" stroke-width="1.65"/></g></svg>
<svg style="position:absolute;left:930px;top:270px;overflow:visible;" width="50" height="50" viewBox="930 270 50 50"><path d="M940 276.3H968.5M940 313.8H968.5M935.2 281V309M973 281V309" stroke="#3A3A3A" stroke-width="1.4"/><g fill="#E0761E"><rect x="933" y="274.1" width="4.4" height="4.4"/><rect x="970.8" y="274.1" width="4.4" height="4.4"/><rect x="933" y="311.6" width="4.4" height="4.4"/><rect x="970.8" y="311.6" width="4.4" height="4.4"/></g><path d="M953.9 281.1L957.7 291.1L968.4 291.6L960.0 298.3L962.8 308.6L953.9 302.7L945.0 308.6L947.8 298.3L939.4 291.6L950.1 291.1Z" fill="#F9D88C" stroke="#E0761E" stroke-width="1.5" stroke-linejoin="round"/></svg>
<div style="position:absolute;left:800.20px;top:326.00px;font-size:18.02px;line-height:18.02px;font-weight:normal;color:#262626;white-space:pre;transform:scaleX(1.0050);transform-origin:0 0;">Zoom</div>
<div style="position:absolute;left:874.40px;top:326.00px;font-size:18.02px;line-height:18.02px;font-weight:normal;color:#262626;white-space:pre;transform:scaleX(0.8764);transform-origin:0 0;">Link</div>
<div style="position:absolute;left:928.70px;top:326.00px;font-size:18.02px;line-height:18.02px;font-weight:normal;color:#262626;white-space:pre;transform:scaleX(0.9923);transform-origin:0 0;">Action</div>
<svg style="position:absolute;left:817.3px;top:353.1px;overflow:visible;" width="12" height="8.8" viewBox="817.3 353.1 12 8.8"><path d="M819.3 355.1L823.3 359.9L827.3 355.1" fill="none" stroke="#333" stroke-width="1.6"/></svg>
<div style="position:absolute;left:871.00px;top:388.00px;font-size:15.84px;line-height:15.84px;font-weight:normal;color:#333;white-space:pre;transform:scaleX(0.9195);transform-origin:0 0;">Links</div>
<svg style="position:absolute;left:660px;top:200px;overflow:visible;" width="360" height="700" viewBox="660 200 360 700"><circle cx="686.4" cy="294.1" r="9" fill="none" stroke="#000" stroke-width="3.9"/><path d="M693.5 288.5L776 225" stroke="#000" stroke-width="4.8"/><path d="M787.9 216.4L765.3 224.2L773 227.5L774.4 236.6Z" fill="#000"/><path d="M1000.9 449.4L916 362" stroke="#000" stroke-width="4.8"/><path d="M907.6 353.1L929.9 364.6L921.5 366.5L918.6 375.7Z" fill="#000"/><path d="M649.5 844.6V746" stroke="#000" stroke-width="4.3"/><path d="M649.5 731.3L657.3 754.6L649.5 751L641.7 754.6Z" fill="#000"/></svg>
<div style="position:absolute;left:1001.60px;top:451.00px;font-size:31.98px;line-height:31.98px;font-weight:bold;color:#000;white-space:pre;transform:scaleX(0.9908);transform-origin:0 0;">Link</div>
<div style="position:absolute;left:517.10px;top:849.00px;font-size:30.52px;line-height:30.52px;font-weight:bold;color:#000;white-space:pre;transform:scaleX(1.0409);transform-origin:0 0;">Selected the text</div>
<div style="position:absolute;left:1513.3px;top:268.4px;width:25.3px;height:574px;background:#F5F5F5;border-radius:12px"></div>
<svg style="position:absolute;left:1515px;top:272px;overflow:visible;" width="22" height="16" viewBox="1515 272 22 16"><path d="M1526 276.3L1532.5 285.5H1519.5Z" fill="#707070" stroke="#707070" stroke-width="1.5" stroke-linejoin="round"/></svg>
<div style="position:absolute;left:1520px;top:294px;width:12px;height:260.7px;background:#717171;border-radius:6px"></div>
<svg style="position:absolute;left:1515px;top:822px;overflow:visible;" width="22" height="16" viewBox="1515 822 22 16"><path d="M1526 834.5L1532.5 825.5H1519.5Z" fill="#707070" stroke="#707070" stroke-width="1.5" stroke-linejoin="round"/></svg>
<svg style="position:absolute;left:1515px;top:844px;overflow:visible;" width="22" height="50" viewBox="1515 844 22 50"><path d="M1526 846.5L1532.5 855H1519.5Z M1526 855.5L1532.5 864H1519.5Z" fill="#707070" stroke="#707070" stroke-width="1.3" stroke-linejoin="round"/><path d="M1526 890.5L1532.5 882H1519.5Z M1526 881.5L1532.5 873H1519.5Z" fill="#707070" stroke="#707070" stroke-width="1.3" stroke-linejoin="round"/></svg>
<div style="position:absolute;left:238px;top:923.8px;width:1300.5px;height:1px;background:#BDBDBD"></div>
<div style="position:absolute;left:253.00px;top:937.00px;font-size:22.24px;line-height:22.24px;font-weight:normal;color:#555555;white-space:pre;transform:scaleX(0.9837);transform-origin:0 0;">Click to add notes</div>
<div style="position:absolute;left:1513.3px;top:927px;width:25.3px;height:45px;background:#F5F5F5;border-radius:12px"></div>
<svg style="position:absolute;left:1515px;top:930px;overflow:visible;" width="22" height="40" viewBox="1515 930 22 40"><path d="M1526 934.5L1532 942.5H1520Z" fill="#707070" stroke="#707070" stroke-width="1.3" stroke-linejoin="round"/><path d="M1526 965.5L1532 957.5H1520Z" fill="#707070" stroke="#707070" stroke-width="1.3" stroke-linejoin="round"/></svg>
<div style="position:absolute;left:2px;top:972.6px;width:1537px;height:33.4px;background:#F3F3F3;border-top:1px solid #CFCFCF;box-sizing:border-box"></div>
<div style="position:absolute;left:19.20px;top:983.00px;font-size:16.86px;line-height:16.86px;font-weight:normal;color:#333333;white-space:pre;transform:scaleX(0.9128);transform-origin:0 0;">Slide 1 of 2</div>
<svg style="position:absolute;left:120px;top:976px;overflow:visible;" width="30" height="28" viewBox="120 976 30 28"><g fill="none" stroke="#262626" stroke-width="1.5" stroke-linejoin="round"><path d="M132 998.4H125V981.3H131.5Q134.2 981.8 134.2 984.5V993"/><path d="M134.2 984.5Q134.2 981.8 137 981.3H143.4V989.8"/><path d="M132.6 995.3L137.3 999.6L144.8 992"/></g></svg>
<div style="position:absolute;left:171.40px;top:983.00px;font-size:16.86px;line-height:16.86px;font-weight:normal;color:#333333;white-space:pre;transform:scaleX(0.9012);transform-origin:0 0;">English (United States)</div>
<svg style="position:absolute;left:345px;top:977px;overflow:visible;" width="28" height="26" viewBox="345 977 28 26"><g fill="none" stroke="#262626" stroke-width="1.4" stroke-linejoin="round" stroke-linecap="round"><circle cx="357.5" cy="982.7" r="2.5"/><path d="M361.3 987.6L364.6 986.2A1.5 1.5 0 0 0 363.6 983.4L359.5 984.9H355.5L351.4 983.4A1.5 1.5 0 0 0 350.4 986.2L354.2 987.6V991.5L352.4 997.6A1.6 1.6 0 0 0 355.3 998.5L357.5 993.3L358.8 996.5"/><path d="M359.8 990.7L368.6 999.4M368.6 990.7L359.8 999.4"/></g></svg>
<div style="position:absolute;left:375.80px;top:982.00px;font-size:17.15px;line-height:17.15px;font-weight:bold;color:#333333;white-space:pre;transform:scaleX(0.9105);transform-origin:0 0;">Accessibility: Investigate</div>
<svg style="position:absolute;left:762px;top:976px;overflow:visible;" width="30" height="28" viewBox="762 976 30 28"><path d="M765 993H789M765 997.5H789M765 1001.5H789M765 988.5H774M780 988.5H789" stroke="#333" stroke-width="1.3"/><path d="M772.5 983.5L777 979.3L781.5 983.5" fill="none" stroke="#333" stroke-width="1.4"/></svg>
<div style="position:absolute;left:792.40px;top:982.00px;font-size:17.15px;line-height:17.15px;font-weight:normal;color:#333333;white-space:pre;transform:scaleX(0.8862);transform-origin:0 0;">Notes</div>
<svg style="position:absolute;left:859px;top:977px;overflow:visible;" width="26" height="26" viewBox="859 977 26 26"><path d="M862.2 980.5H882.2V994H868.5L864.8 998.8V994H862.2Z" fill="none" stroke="#333" stroke-width="1.4" stroke-linejoin="round"/></svg>
<div style="position:absolute;left:887.40px;top:982.00px;font-size:17.15px;line-height:17.15px;font-weight:normal;color:#333333;white-space:pre;transform:scaleX(0.9008);transform-origin:0 0;">Comments</div>
<div style="position:absolute;left:990px;top:973.6px;width:59.6px;height:32px;background:#E0E0E0"></div>
<svg style="position:absolute;left:1006px;top:978px;overflow:visible;" width="28" height="24" viewBox="1006 978 28 24"><rect x="1010.2" y="981.6" width="20" height="16.3" fill="none" stroke="#333" stroke-width="1.4"/><path d="M1013.8 981.6V997.9" stroke="#333" stroke-width="1.4"/><rect x="1020" y="984.6" width="6.5" height="3.5" fill="none" stroke="#333" stroke-width="1.3"/><path d="M1017 992H1030" stroke="#333" stroke-width="1.2"/></svg>
<svg style="position:absolute;left:1066px;top:978px;overflow:visible;" width="28" height="24" viewBox="1066 978 28 24"><g fill="none" stroke="#333" stroke-width="1.4"><rect x="1070.2" y="981.8" width="7.8" height="6.5"/><rect x="1082.2" y="981.8" width="7.8" height="6.5"/><rect x="1070.2" y="991.5" width="7.8" height="6.5"/><rect x="1082.2" y="991.5" width="7.8" height="6.5"/></g></svg>
<svg style="position:absolute;left:1126px;top:977px;overflow:visible;" width="28" height="26" viewBox="1126 977 28 26"><g fill="none" stroke="#333" stroke-width="1.4"><path d="M1139.5 983V999.5M1129.2 981.5H1136.5L1139.5 983L1142.5 981.5H1149.8V999.5H1129.2Z"/><path d="M1132 986H1136.5M1132 989.5H1136.5M1132 993H1136.5M1142.5 986H1147M1142.5 989.5H1147M1142.5 993H1147"/></g></svg>
<svg style="position:absolute;left:1186px;top:976px;overflow:visible;" width="28" height="26" viewBox="1186 976 28 26"><g fill="none" stroke="#333" stroke-width="1.4"><path d="M1189.5 980H1209"/><rect x="1191.2" y="980" width="16.2" height="10.5"/><path d="M1195.5 984.3H1203M1199.3 990.5V998.5M1194 998.8H1204.5"/></g></svg>
<div style="position:absolute;left:1238px;top:988.6px;width:11.3px;height:1.3px;background:#444"></div>
<div style="position:absolute;left:1258.4px;top:988.8px;width:148px;height:1.4px;background:#555"></div>
<div style="position:absolute;left:1295.9px;top:981px;width:8.1px;height:16.8px;background:#5A5A5A"></div>
<div style="position:absolute;left:1331.4px;top:986px;width:1.3px;height:8px;background:#555"></div>
<svg style="position:absolute;left:1411px;top:984px;overflow:visible;" width="18" height="12" viewBox="1411 984 18 12"><path d="M1413.8 989.6H1425.4M1419.6 983.8V995.4" stroke="#444" stroke-width="1.3"/></svg>
<div style="position:absolute;left:1444.60px;top:983.00px;font-size:16.86px;line-height:16.86px;font-weight:normal;color:#333333;white-space:pre;transform:scaleX(0.8922);transform-origin:0 0;">59%</div>
<svg style="position:absolute;left:1490px;top:976px;overflow:visible;" width="28" height="28" viewBox="1490 976 28 28"><g fill="none" stroke="#333" stroke-width="1.4"><rect x="1498.5" y="984.5" width="11" height="11"/><path d="M1500.5 981.5L1504 978.7L1507.5 981.5M1500.5 998.5L1504 1001.3L1507.5 998.5M1495.5 986.5L1493 990L1495.5 993.5M1512.5 986.5L1515 990L1512.5 993.5"/></g></svg></body></html>
